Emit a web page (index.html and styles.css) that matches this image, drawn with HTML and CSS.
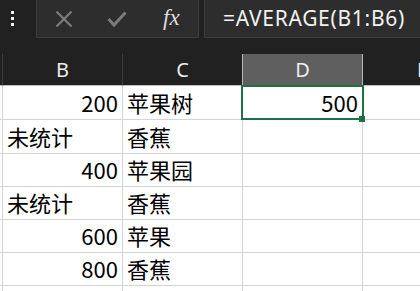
FILE: index.html
```html
<!DOCTYPE html>
<html lang="zh-CN">
<head>
<meta charset="utf-8">
<title>Excel</title>
<link rel="stylesheet" href="styles.css">
</head>
<body>
<div class="app">
  <div class="toolbar">
    <div class="menu-dots"><span></span><span></span><span></span></div>
    <div class="fbtns">
      <div class="fbtn">
        <svg width="18" height="16" viewBox="0 0 18 16"><path d="M1.5 0.5 L16.5 15.5 M16.5 0.5 L1.5 15.5" stroke="#7b7b7b" stroke-width="2.2" fill="none"/></svg>
      </div>
      <div class="fbtn">
        <svg width="20" height="16" viewBox="0 0 20 16"><path d="M1.5 8 L7 14 L18.5 1.5" stroke="#7b7b7b" stroke-width="3" fill="none"/></svg>
      </div>
      <div class="fbtn fx">fx</div>
    </div>
    <div class="formula">=AVERAGE(B1:B6)</div>
  </div>
  <div class="sheet">
    <div class="row head">
      <div class="c stub"></div>
      <div class="c">B</div>
      <div class="c">C</div>
      <div class="c sel">D</div>
      <div class="c">E</div>
    </div>
    <div class="row first">
      <div class="c stub"></div>
      <div class="c num">200</div>
      <div class="c">苹果树</div>
      <div class="c num active">500<i class="handle"></i></div>
      <div class="c"></div>
    </div>
    <div class="row">
      <div class="c stub"></div>
      <div class="c">未统计</div>
      <div class="c">香蕉</div>
      <div class="c"></div>
      <div class="c"></div>
    </div>
    <div class="row">
      <div class="c stub"></div>
      <div class="c num">400</div>
      <div class="c">苹果园</div>
      <div class="c"></div>
      <div class="c"></div>
    </div>
    <div class="row">
      <div class="c stub"></div>
      <div class="c">未统计</div>
      <div class="c">香蕉</div>
      <div class="c"></div>
      <div class="c"></div>
    </div>
    <div class="row">
      <div class="c stub"></div>
      <div class="c num">600</div>
      <div class="c">苹果</div>
      <div class="c"></div>
      <div class="c"></div>
    </div>
    <div class="row">
      <div class="c stub"></div>
      <div class="c num">800</div>
      <div class="c">香蕉</div>
      <div class="c"></div>
      <div class="c"></div>
    </div>
    <div class="row">
      <div class="c stub"></div>
      <div class="c"></div>
      <div class="c"></div>
      <div class="c"></div>
      <div class="c"></div>
    </div>
  </div>
</div>
</body>
</html>
```
FILE: styles.css
```css
html, body {
  margin: 0;
  padding: 0;
}
body {
  background: #212121;
  width: 420px;
  height: 291px;
  overflow: hidden;
}
.app {
  width: 420px;
  height: 291px;
  overflow: hidden;
  display: flex;
  flex-direction: column;
}
.toolbar {
  display: flex;
  height: 38px;
  flex: none;
  margin-bottom: 16px;
}
.menu-dots {
  width: 36px;
  display: flex;
  flex-direction: column;
  align-items: flex-start;
  padding: 11px 0 0 11px;
  box-sizing: border-box;
  gap: 3px;
}
.menu-dots span {
  width: 3px;
  height: 3px;
  background: #f2f2f2;
}
.fbtns {
  width: 163px;
  box-sizing: border-box;
  background: #2d2d2d;
  border: 1px solid #3c3c3c;
  border-top: none;
  display: flex;
  margin-right: 5px;
}
.fbtn {
  flex: 1;
  display: flex;
  align-items: center;
  justify-content: center;
}
.fx {
  font-family: "Liberation Serif", "DejaVu Serif", serif;
  font-style: italic;
  font-size: 23px;
  color: #dedede;
  padding-bottom: 2px;
  padding-left: 1px;
}
.formula {
  flex: 1;
  box-sizing: border-box;
  background: #2d2d2d;
  border: 1px solid #3c3c3c;
  border-top: none;
  border-right: none;
  display: flex;
  align-items: center;
  padding-left: 18px;
  font-family: "Noto Sans", sans-serif;
  font-size: 21px;
  letter-spacing: 0.7px;
  color: #f2f2f2;
  white-space: nowrap;
  padding-bottom: 2px;
}
.sheet {
  flex: 1;
  background: #ffffff;
}
.row {
  display: grid;
  grid-template-columns: 3px 120px 120px 120px 120px;
  height: 33px;
}
.c {
  box-sizing: border-box;
  border-right: 1px solid #d4d4d4;
  border-bottom: 1px solid #d4d4d4;
  display: flex;
  align-items: center;
  padding: 0 4px 1px 4px;
  font-family: "Noto Sans CJK SC", "Noto Sans", sans-serif;
  font-size: 22px;
  color: #000;
  white-space: nowrap;
  overflow: visible;
}
.num {
  justify-content: flex-end;
}
.stub {
  padding: 0;
}
.row.first {
  height: 34px;
}
.head {
  height: 32px;
  background: #212121;
}
.head .c {
  justify-content: center;
  font-family: "Noto Sans", sans-serif;
  font-size: 20px;
  color: #ececec;
  border-right: 1px solid #3d3d3d;
  border-bottom: 1px solid #bdbdbd;
  padding: 0 0 1px 0;
  overflow: hidden;
}
.head .c.sel {
  background: #5f5f5f;
  border-left: 1px solid #b8b8b8;
  border-right: 1px solid #b8b8b8;
  margin-left: -1px;
}
.active {
  position: relative;
}
.active::after {
  content: "";
  position: absolute;
  left: -2px;
  top: -1px;
  right: -2px;
  bottom: -1px;
  border: 2px solid #1e7145;
  pointer-events: none;
}
.handle {
  position: absolute;
  right: -3px;
  bottom: -3px;
  width: 6px;
  height: 6px;
  background: #1e7145;
  z-index: 2;
}
```
